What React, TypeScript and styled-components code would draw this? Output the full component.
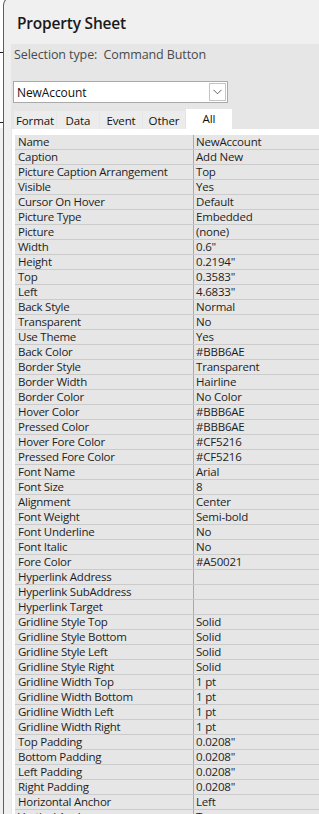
import styled, { createGlobalStyle } from "styled-components";

const GlobalStyle = createGlobalStyle`
    html, body {
        margin: 0;
        padding: 0;
        height: 814px;
        overflow: hidden;
        background: #ffffff;
        font-family: "Open Sans", "Noto Sans", Arial, sans-serif;
    }
`;

const properties: [string, string][] = [
    ["Name", "NewAccount"],
    ["Caption", "Add New"],
    ["Picture Caption Arrangement", "Top"],
    ["Visible", "Yes"],
    ["Cursor On Hover", "Default"],
    ["Picture Type", "Embedded"],
    ["Picture", "(none)"],
    ["Width", "0.6\""],
    ["Height", "0.2194\""],
    ["Top", "0.3583\""],
    ["Left", "4.6833\""],
    ["Back Style", "Normal"],
    ["Transparent", "No"],
    ["Use Theme", "Yes"],
    ["Back Color", "#BBB6AE"],
    ["Border Style", "Transparent"],
    ["Border Width", "Hairline"],
    ["Border Color", "No Color"],
    ["Hover Color", "#BBB6AE"],
    ["Pressed Color", "#BBB6AE"],
    ["Hover Fore Color", "#CF5216"],
    ["Pressed Fore Color", "#CF5216"],
    ["Font Name", "Arial"],
    ["Font Size", "8"],
    ["Alignment", "Center"],
    ["Font Weight", "Semi-bold"],
    ["Font Underline", "No"],
    ["Font Italic", "No"],
    ["Fore Color", "#A50021"],
    ["Hyperlink Address", ""],
    ["Hyperlink SubAddress", ""],
    ["Hyperlink Target", ""],
    ["Gridline Style Top", "Solid"],
    ["Gridline Style Bottom", "Solid"],
    ["Gridline Style Left", "Solid"],
    ["Gridline Style Right", "Solid"],
    ["Gridline Width Top", "1 pt"],
    ["Gridline Width Bottom", "1 pt"],
    ["Gridline Width Left", "1 pt"],
    ["Gridline Width Right", "1 pt"],
    ["Top Padding", "0.0208\""],
    ["Bottom Padding", "0.0208\""],
    ["Left Padding", "0.0208\""],
    ["Right Padding", "0.0208\""],
    ["Horizontal Anchor", "Left"],
    ["Vertical Anchor", "Top"],
];

const tabs = ["Format", "Data", "Event", "Other", "All"];

const App = () => {
    return (
        <>
            <GlobalStyle />
            <Page>
                <BehindStrip>
                    <StripLine top={52} />
                    <StripLine top={122} />
                </BehindStrip>
                <Frame>
                    <Title>Property Sheet</Title>
                    <Body>
                        <SelectionType>Selection type:&nbsp; Command Button</SelectionType>
                        <Combo>
                            <ComboText>NewAccount</ComboText>
                            <ComboButton>
                                <svg width="9" height="6" viewBox="0 0 9 6">
                                    <path d="M0.5 0.8 L4.5 4.8 L8.5 0.8" fill="none" stroke="#606060" strokeWidth="1" />
                                </svg>
                            </ComboButton>
                        </Combo>
                        <TabRow>
                            {tabs.map((tab) => (
                                <Tab key={tab} active={tab === "All"}>{tab}</Tab>
                            ))}
                        </TabRow>
                        <SheetPanel>
                            {properties.map(([name, value]) => (
                                <Row key={name}>
                                    <NameCell>{name}</NameCell>
                                    <ValueCell>{value}</ValueCell>
                                </Row>
                            ))}
                        </SheetPanel>
                    </Body>
                </Frame>
            </Page>
        </>
    );
};

const Page = styled.div`
    display: flex;
    height: 814px;
    overflow: hidden;
`;

const BehindStrip = styled.div`
    width: 3px;
    flex: none;
    height: 100%;
    background: linear-gradient(#ffffff 0, #ffffff 128px, #f0f0f0 128px);
    position: relative;
`;

const StripLine = styled.div<{ top: number }>`
    position: absolute;
    left: 0;
    right: 0;
    top: ${({ top }) => top}px;
    height: 1px;
    background: #202020;
`;

const Frame = styled.div`
    flex: 1;
    margin-top: -3px;
    background: #f0f0f0;
    border-left: 1px solid #5f5f5f;
    border-top: 1px solid #5f5f5f;
    border-top-left-radius: 8px;
    display: flex;
    flex-direction: column;
    min-width: 0;
    overflow: hidden;
`;

const Title = styled.div`
    flex: none;
    height: 46px;
    box-sizing: border-box;
    padding: 15px 0 0 13px;
    font-size: 15.5px;
    font-weight: 600;
    letter-spacing: -0.2px;
    line-height: 20px;
    color: #1a1a1a;
`;

const Body = styled.div`
    flex: none;
    margin-left: 7px;
    background: #e6e6e6;
    display: flex;
    flex-direction: column;
`;

const SelectionType = styled.div`
    flex: none;
    height: 22px;
    padding-left: 3px;
    font-size: 12.5px;
    line-height: 22px;
    color: #4a4a4a;
    letter-spacing: -0.1px;
`;

const Combo = styled.div`
    flex: none;
    margin: 15px 0 0 2px;
    width: 215px;
    height: 22px;
    box-sizing: border-box;
    border: 1px solid #a9a9a9;
    background: #ffffff;
    display: flex;
    align-items: center;
    justify-content: space-between;
    padding: 0 1px 0 3px;
`;

const ComboText = styled.span`
    font-size: 12px;
    color: #111111;
    letter-spacing: -0.1px;
`;

const ComboButton = styled.div`
    width: 17px;
    height: 18px;
    box-sizing: border-box;
    border: 1px solid #c4c4c4;
    background: #ffffff;
    display: flex;
    align-items: center;
    justify-content: center;
`;

const TabRow = styled.div`
    flex: none;
    margin: 6px 0 0 3px;
    height: 20px;
    display: flex;
    align-items: flex-end;
    gap: 1px;
`;

const Tab = styled.div<{ active: boolean }>`
    width: ${({ active }) => (active ? "46px" : "42px")};
    height: ${({ active }) => (active ? "20px" : "18px")};
    background: ${({ active }) => (active ? "#ffffff" : "#ececec")};
    display: flex;
    align-items: center;
    justify-content: center;
    padding-bottom: ${({ active }) => (active ? "2px" : "0")};
    box-sizing: border-box;
    font-size: 11.5px;
    color: #111111;
    letter-spacing: -0.1px;
`;

const SheetPanel = styled.div`
    flex: none;
    margin-left: 1px;
    background: #ffffff;
    padding: 6px 0 0 3px;
    display: flex;
    flex-direction: column;
`;

const Row = styled.div`
    display: grid;
    grid-template-columns: 179px 1fr;
    height: 15px;
    box-sizing: border-box;
    border-bottom: 1px solid #cbcbcb;
    background: #e6e6e6;
    flex: none;
`;

const NameCell = styled.div`
    border-right: 1px solid #aaaaaa;
    padding-left: 3px;
    font-size: 11.5px;
    line-height: 14px;
    color: #1e1e1e;
    white-space: nowrap;
    overflow: hidden;
    letter-spacing: -0.25px;
`;

const ValueCell = styled.div`
    padding-left: 2px;
    font-size: 11.5px;
    line-height: 14px;
    color: #1e1e1e;
    white-space: nowrap;
    overflow: hidden;
    letter-spacing: -0.2px;
`;

export default App;
